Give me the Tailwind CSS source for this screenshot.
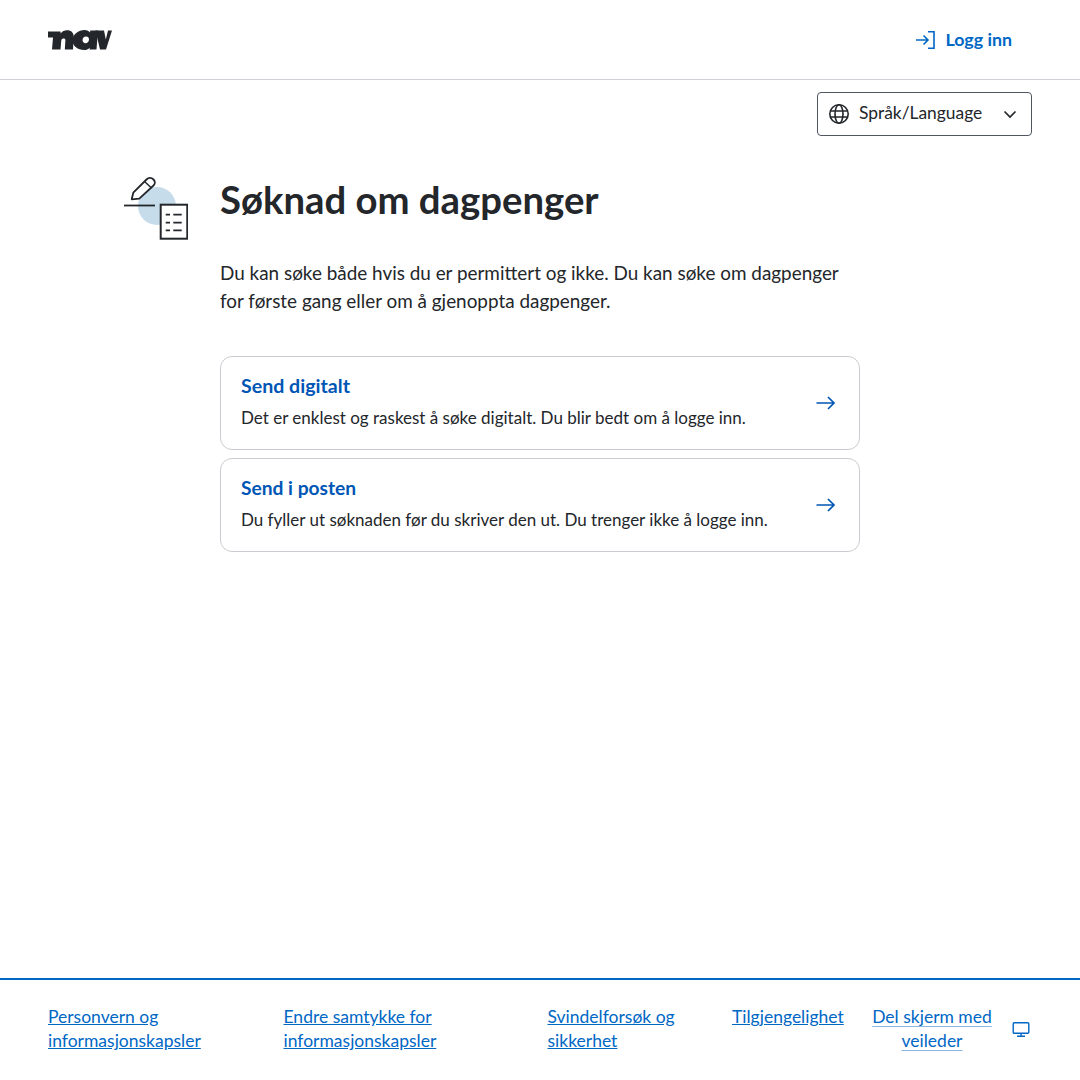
<!DOCTYPE html>
<html lang="no"><head><meta charset="utf-8"><script src="https://cdn.jsdelivr.net/npm/@tailwindcss/browser@4"></script></head>
<body class="bg-white font-['Lato','Noto_Sans',sans-serif] text-[#23262a]">
<div class="flex h-[1080px] w-[1080px] flex-col overflow-hidden">
<header class="flex h-[80px] shrink-0 items-center justify-between border-b border-[#cfd3d8] pl-[48px] pr-[68px]">
<svg class="h-[20px] w-[64px]" viewBox="0 0 64 20" fill="#23262a"><path d="M0 1.500H12.500l.2 2C14.200 1.500 16.500.3 19 .3c4.500 0 7 2.700 6.700 7L25 19.500H16.800l.6-9.500c.2-2-3.600-2.300-4.100.2L12.500 19.500H4L5 7.500H0z"/><path fill-rule="evenodd" d="M36.500 0c2.500 0 4.500 1 5.500 2.500l.3-2H50L48.500 19.500h-7l.2-1.800C40.300 19.200 38.500 20 36 20c-6 0-11.500-4-11.500-9.500C24.500 4.500 30.500 0 36.500 0zm1.500 6.500c-2 0-3.500 1.600-3.500 3.600s1.400 3.200 3 3.200c2 0 3.500-1.700 3.500-3.700s-1-3.100-3-3.100z"/><path d="M47.500 .5h8.500l1.800 9 2.200-9H64L58 19.500H52z"/></svg>
<a class="flex items-center gap-[8px] text-[17.8px] leading-[24px] font-bold text-[#0067c5]"><svg class="h-[24px] w-[24px]" viewBox="0 0 24 24" fill="none" stroke="currentColor" stroke-width="1.600"><path d="M15 3.750h6v16.500h-6M3 12h11.500M10.500 7.500 15 12l-4.500 4.500"/></svg><span class="-mt-[2px]">Logg inn</span></a>
</header>
<div class="flex justify-end pr-[48px] pt-[12px]">
<div class="flex h-[44px] w-[215px] items-center rounded-[4px] border border-[#4f5660] pl-[10px] pr-[11px] text-[17.4px] text-[#23262a]"><svg class="mr-[9px] h-[22px] w-[22px]" viewBox="0 0 22 22" fill="none" stroke="#23262a" stroke-width="1.600"><circle cx="11" cy="11" r="9.200"/><ellipse cx="11" cy="11" rx="4" ry="9.200"/><path d="M2.500 8h17M2.500 14h17"/></svg><span class="-mt-[2px]">Språk/Language</span><svg class="ml-auto h-[20px] w-[20px]" viewBox="0 0 20 20" fill="none" stroke="#23262a" stroke-width="1.700"><path d="M4.500 7.500 10 13l5.500-5.500"/></svg></div>
</div>
<main class="relative mx-auto mt-[40px] w-[640px] flex-1">
<svg class="absolute left-[-96px] top-0 h-[64px] w-[64px]" viewBox="0 0 64 64" fill="none"><circle cx="33" cy="30" r="19" fill="#c6dcea"/><path d="M0 29.500h31" stroke="#23262a" stroke-width="1.800"/><path d="M7.700 23.300 9.300 16.700 22.500 3.500c2-2 5-2 7 0s1.500 4.500 0 6L15.300 22.700z" fill="#fff" stroke="#23262a" stroke-width="1.800" stroke-linejoin="round"/><path d="M20.500 5.500l7 6.500" stroke="#23262a" stroke-width="1.500"/><rect x="36.700" y="28.700" width="26.600" height="34" fill="#fff" stroke="#23262a" stroke-width="2"/><path d="M41.700 38.700H46M49.300 38.700H57.700M41.700 46.700H46M49.300 46.700H57.700M41.700 54.300H46M49.300 54.300H57.700" stroke="#23262a" stroke-width="1.800"/></svg>
<h1 class="-mt-[1px] text-[38.3px] leading-[48px] font-bold">Søknad om dagpenger</h1>
<p class="mt-[36px] text-[18.9px] leading-[28px]">Du kan søke både hvis du er permittert og ikke. Du kan søke om dagpenger for første gang eller om å gjenoppta dagpenger.</p>
<div class="mt-[41px] flex flex-col gap-[8px]">
<a class="flex h-[94px] items-center justify-between rounded-[12px] border border-[#c9ccd1] pl-[20px] pr-[22px]"><div class="-mt-[4px]"><div class="text-[19.6px] leading-[28px] font-bold text-[#0056b4]">Send digitalt</div><div class="mt-[6px] text-[17px] leading-[24px]">Det er enklest og raskest å søke digitalt. Du blir bedt om å logge inn.</div></div><svg class="h-[24px] w-[24px]" viewBox="0 0 24 24" fill="none" stroke="#0056b4" stroke-width="1.700"><path d="M3.500 12H21M15 6l6 6-6 6"/></svg></a>
<a class="flex h-[94px] items-center justify-between rounded-[12px] border border-[#c9ccd1] pl-[20px] pr-[22px]"><div class="-mt-[4px]"><div class="text-[19.2px] leading-[28px] font-bold text-[#0056b4]">Send i posten</div><div class="mt-[6px] text-[17px] leading-[24px]">Du fyller ut søknaden før du skriver den ut. Du trenger ikke å logge inn.</div></div><svg class="h-[24px] w-[24px]" viewBox="0 0 24 24" fill="none" stroke="#0056b4" stroke-width="1.700"><path d="M3.500 12H21M15 6l6 6-6 6"/></svg></a>
</div>
</main>
<footer class="flex h-[102px] shrink-0 items-start border-t-2 border-[#0067c5] pl-[48px] pt-[25px] text-[17.5px] leading-[24px] text-[#0067c5]">
<div class="w-[235.5px]"><a class="underline">Personvern og<br>informasjonskapsler</a></div>
<div class="w-[264px]"><a class="underline">Endre samtykke for<br>informasjonskapsler</a></div>
<div class="w-[184.5px]"><a class="underline">Svindelforsøk og<br>sikkerhet</a></div>
<div class="w-[138px]"><a class="underline">Tilgjengelighet</a></div>
<div class="flex items-center gap-[17px]"><a class="w-[124px] text-center underline decoration-[#8fb9e3] underline-offset-[3px]">Del skjerm med<br>veileder</a><svg class="h-[20px] w-[20px]" viewBox="0 0 20 20" fill="none" stroke="#0067c5" stroke-width="1.400"><rect x="2.200" y="3.700" width="15.600" height="10.500" rx="1"/><path d="M10 14.200v3M6 17.200h8"/></svg></div>
</footer>
</div></body></html>
